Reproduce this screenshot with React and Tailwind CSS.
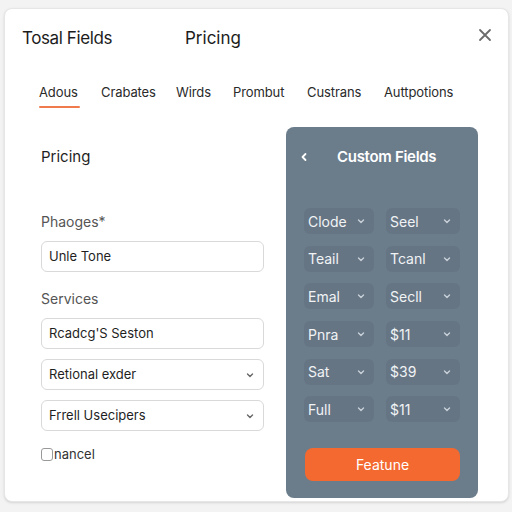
import React from "react";

const Chevron = ({ className = "" }) => (
  <svg width="10" height="10" viewBox="0 0 10 10" className={className} fill="none" stroke="currentColor" strokeWidth="1.4" strokeLinecap="round" strokeLinejoin="round">
    <path d="M2.5 4 L5 6.5 L7.5 4" />
  </svg>
);

const Cell = ({ label, w }) => (
  <div className={`${w} h-[26px] rounded-md bg-[#657584] flex items-center justify-between pl-[4px] pr-[8px] text-[14px] text-[#f1f3f5]`}>
    <span>{label}</span>
    <Chevron className="text-[#c9d1d8]" />
  </div>
);

export default function App() {
  const rows = [
    ["Clode", "Seel"],
    ["Teail", "Tcanl"],
    ["Emal", "Secll"],
    ["Pnra", "$11"],
    ["Sat", "$39"],
    ["Full", "$11"],
  ];
  const tabs = [
    ["Adous", "w-[62px]"],
    ["Crabates", "w-[75px]"],
    ["Wirds", "w-[57px]"],
    ["Prombut", "w-[74px]"],
    ["Custrans", "w-[77px]"],
    ["Auttpotions", "w-[80px]"],
  ];
  return (
    <div className="w-[512px] h-[512px] bg-[#f3f3f3] pt-[8px] pl-[4px]" style={{ fontFamily: "Inter, 'Noto Sans', sans-serif" }}>
      <div className="w-[505px] h-[494px] bg-white rounded-lg border border-[#e6e6e6] shadow-sm flex flex-col">
        <div className="flex items-center pt-[17px] pl-[17px] pr-[16px] h-[43px]">
          <span className="text-[17px] text-[#1c1c1c] tracking-[-0.4px] w-[163px]">Tosal Fields</span>
          <span className="text-[17px] text-[#1c1c1c]">Pricing</span>
          <svg className="ml-auto mb-[9px]" width="14" height="14" viewBox="0 0 14 14" stroke="#6b6b6b" strokeWidth="1.8" strokeLinecap="round">
            <path d="M2 2 L12 12 M12 2 L2 12" />
          </svg>
        </div>
        <div className="flex items-end pl-[34px] mt-[30px] h-[26px] text-[13px] text-[#2a2a2a]">
          {tabs.map(([t, w], i) => (
            <div key={t} className={`flex flex-col items-start ${w}`}>
              <span className="leading-[16px] tracking-[-0.1px]">{t}</span>
              <div className={`mt-[6px] h-[2px] w-[41px] rounded ${i === 0 ? "bg-[#f07a4b]" : "bg-transparent"}`} />
            </div>
          ))}
        </div>
        <div className="flex mt-[19px] pl-[36px]">
          <div className="w-[223px] flex flex-col">
            <div className="mt-[21px] text-[15px] text-[#1f1f1f] leading-[18px]">Pricing</div>
            <div className="mt-[47px] text-[14px] text-[#555] leading-[18px]">Phaoges*</div>
            <div className="mt-[10px] h-[31px] rounded-md border border-[#d9d9d9] flex items-center px-[7px] text-[13px] text-[#1f1f1f]">Unle Tone</div>
            <div className="mt-[18px] text-[14px] text-[#555] leading-[18px]">Services</div>
            <div className="mt-[10px] h-[31px] rounded-md border border-[#d9d9d9] flex items-center px-[7px] text-[13px] text-[#1f1f1f]">Rcadcg'S Seston</div>
            <div className="mt-[10px] h-[31px] rounded-md border border-[#d9d9d9] flex items-center justify-between px-[7px] text-[13px] text-[#1f1f1f]">
              <span>Retional exder</span>
              <Chevron className="text-[#666] mr-[1px]" />
            </div>
            <div className="mt-[10px] h-[31px] rounded-md border border-[#d9d9d9] flex items-center justify-between px-[7px] text-[13px] text-[#1f1f1f]">
              <span>Frrell Usecipers</span>
              <Chevron className="text-[#666] mr-[1px]" />
            </div>
            <div className="mt-[14px] flex items-center text-[13px] text-[#333]">
              <div className="w-[12px] h-[13px] rounded-[3px] border border-[#999] mr-[1px]" />
              <span>nancel</span>
            </div>
          </div>
          <div className="ml-[22px] w-[192px] h-[371px] rounded-lg bg-[#6b7c8b] flex flex-col">
            <div className="flex items-center mt-[21px] h-[18px] pl-[14px] text-white">
              <svg width="8" height="10" viewBox="0 0 8 10" fill="none" stroke="white" strokeWidth="1.8" strokeLinecap="round" strokeLinejoin="round">
                <path d="M5.5 2 L2.5 5 L5.5 8" />
              </svg>
              <span className="ml-[29px] text-[15px] font-semibold tracking-[-0.3px]">Custom Fields</span>
            </div>
            <div className="mt-[42px] pl-[18px] flex flex-col gap-[11.7px]">
              {rows.map(([a, b], i) => (
                <div key={i} className="flex gap-[12px]">
                  <Cell label={a} w="w-[70px]" />
                  <Cell label={b} w="w-[74px]" />
                </div>
              ))}
            </div>
            <div className="mt-[26px] ml-[19px] w-[155px] h-[33px] rounded-lg bg-[#f4692f] flex items-center justify-center text-[14px] text-white">
              Featune
            </div>
          </div>
        </div>
      </div>
    </div>
  );
}
